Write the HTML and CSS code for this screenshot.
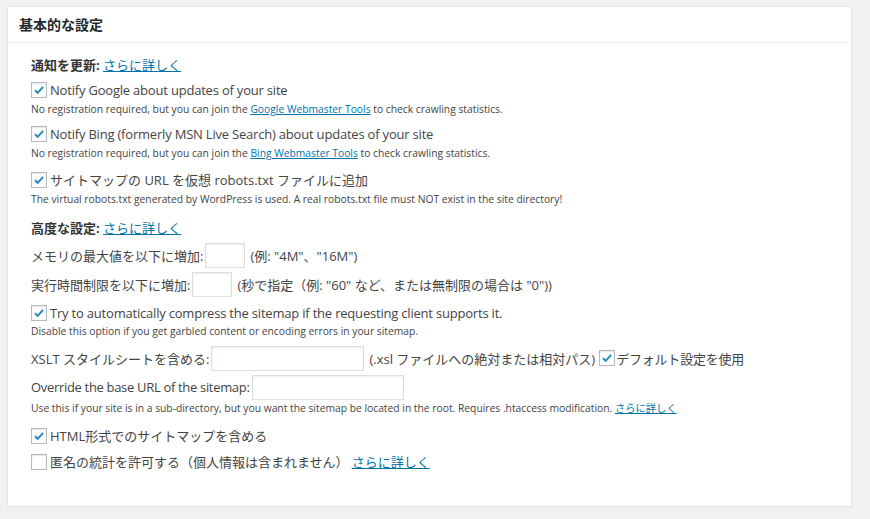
FILE: index.html
```html
<!DOCTYPE html>
<html lang="ja">
<head>
<meta charset="utf-8">
<title>基本的な設定</title>
<link rel="stylesheet" href="styles.css">
</head>
<body>
<div class="postbox">
  <h2 class="hndle">基本的な設定</h2>
  <div class="inside">
    <div class="heading"><b>通知を更新:</b> <a href="#">さらに詳しく</a></div>

    <div class="opt g5">
      <label class="cbrow en"><span class="cb on"><svg viewBox="0 0 16 16"><path d="M3.4 8.3 6.5 11.3 12.7 4.4"/></svg></span>Notify Google about updates of your site</label>
      <small class="desc">No registration required, but you can join the <a href="#">Google Webmaster Tools</a> to check crawling statistics.</small>
    </div>

    <div class="opt g7">
      <label class="cbrow en"><span class="cb on"><svg viewBox="0 0 16 16"><path d="M3.4 8.3 6.5 11.3 12.7 4.4"/></svg></span>Notify Bing (formerly MSN Live Search) about updates of your site</label>
      <small class="desc">No registration required, but you can join the <a href="#">Bing Webmaster Tools</a> to check crawling statistics.</small>
    </div>

    <div class="opt g9">
      <label class="cbrow"><span class="cb on"><svg viewBox="0 0 16 16"><path d="M3.4 8.3 6.5 11.3 12.7 4.4"/></svg></span>サイトマップの URL を仮想 robots.txt ファイルに追加</label>
      <small class="desc">The virtual robots.txt generated by WordPress is used. A real robots.txt file must NOT exist in the site directory!</small>
    </div>

    <div class="heading g11"><b>高度な設定:</b> <a href="#">さらに詳しく</a></div>

    <div class="field g5">
      <label>メモリの最大値を以下に増加:</label><span class="input w40"></span><span class="after">(例: "4M"、"16M")</span>
    </div>

    <div class="field g5">
      <label>実行時間制限を以下に増加:</label><span class="input w40"></span><span class="after">(秒で指定（例: "60" など、または無制限の場合は "0"))</span>
    </div>

    <div class="opt g7">
      <label class="cbrow en"><span class="cb on"><svg viewBox="0 0 16 16"><path d="M3.4 8.3 6.5 11.3 12.7 4.4"/></svg></span>Try to automatically compress the sitemap if the requesting client supports it.</label>
      <small class="desc tight">Disable this option if you get garbled content or encoding errors in your sitemap.</small>
    </div>

    <div class="field g7">
      <label>XSLT スタイルシートを含める:</label><span class="input w153"></span><span class="after">(.xsl ファイルへの絶対または相対パス)</span><span class="cb on inl"><svg viewBox="0 0 16 16"><path d="M3.4 8.3 6.5 11.3 12.7 4.4"/></svg></span><span class="cbtext">デフォルト設定を使用</span>
    </div>

    <div class="opt g5">
      <div class="field">
        <label class="en tighter">Override the base URL of the sitemap:</label><span class="input w152"></span>
      </div>
      <small class="desc">Use this if your site is in a sub-directory, but you want the sitemap be located in the root. Requires .htaccess modification. <a href="#">さらに詳しく</a></small>
    </div>

    <div class="opt g10">
      <label class="cbrow"><span class="cb on"><svg viewBox="0 0 16 16"><path d="M3.4 8.3 6.5 11.3 12.7 4.4"/></svg></span>HTML形式でのサイトマップを含める</label>
    </div>

    <div class="opt g6">
      <label class="cbrow"><span class="cb"></span>匿名の統計を許可する（個人情報は含まれません） <a class="more" href="#">さらに詳しく</a></label>
    </div>
  </div>
</div>
</body>
</html>
```

FILE: styles.css
```css
html, body {
  margin: 0;
  padding: 0;
}

body {
  background: #f1f1f1;
  font-family: "Open Sans", "Noto Sans CJK JP", sans-serif;
  font-size: 13px;
  color: #444;
}

a {
  color: #0073aa;
  text-decoration: underline;
}

.en {
  letter-spacing: -0.2px;
}

.en.tighter {
  letter-spacing: -0.32px;
}

.postbox {
  margin: 6px 0 0 7px;
  width: 845px;
  height: 501px;
  box-sizing: border-box;
  background: #fff;
  border: 1px solid #e5e5e5;
  box-shadow: 0 1px 1px rgba(0, 0, 0, 0.04);
}

.hndle {
  margin: 0;
  padding: 1px 12px 0 11px;
  height: 34px;
  line-height: 33px;
  font-size: 14px;
  font-weight: 700;
  color: #23282d;
  border-bottom: 1px solid #eee;
}

.inside {
  padding: 12px 0 0 23px;
}

.heading {
  line-height: 20px;
  height: 20px;
}

.heading b {
  font-weight: 700;
  color: #333;
}

.g5 { margin-top: 5px; }
.g6 { margin-top: 6px; }
.g7 { margin-top: 7px; }
.g9 { margin-top: 9px; }
.g10 { margin-top: 10px; }
.g11 { margin-top: 11px; }

.cbrow {
  display: flex;
  align-items: center;
  height: 20px;
  line-height: 20px;
  white-space: nowrap;
}

.cb {
  flex: none;
  width: 16px;
  height: 16px;
  box-sizing: border-box;
  border: 1px solid #b4b9be;
  background: #fff;
  box-shadow: inset 0 1px 2px rgba(0, 0, 0, 0.1);
  margin-right: 3px;
  display: inline-flex;
}

.cb svg {
  width: 14px;
  height: 14px;
  fill: none;
  stroke: #1e8cbe;
  stroke-width: 2.3;
  stroke-linecap: butt;
  stroke-linejoin: miter;
}

.cb.inl {
  margin-left: 4px;
  margin-right: 1px;
}

.cbtext {
  letter-spacing: -0.2px;
}

.cbrow .more {
  margin-left: 3px;
}

.desc {
  display: block;
  margin-top: 1px;
  line-height: 16px;
  font-size: 10.3px;
  white-space: nowrap;
}

.desc.tight {
  margin-top: 0;
}

.field {
  display: flex;
  align-items: center;
  height: 24px;
  white-space: nowrap;
}

.input {
  flex: none;
  height: 25px;
  box-sizing: border-box;
  border: 1px solid #ddd;
  box-shadow: inset 0 1px 2px rgba(0, 0, 0, 0.07);
  background: #fff;
  margin-left: 2px;
}

.w40 { width: 40px; }
.w152 { width: 152px; }
.w153 { width: 153px; }

.after {
  margin-left: 5px;
}
```
